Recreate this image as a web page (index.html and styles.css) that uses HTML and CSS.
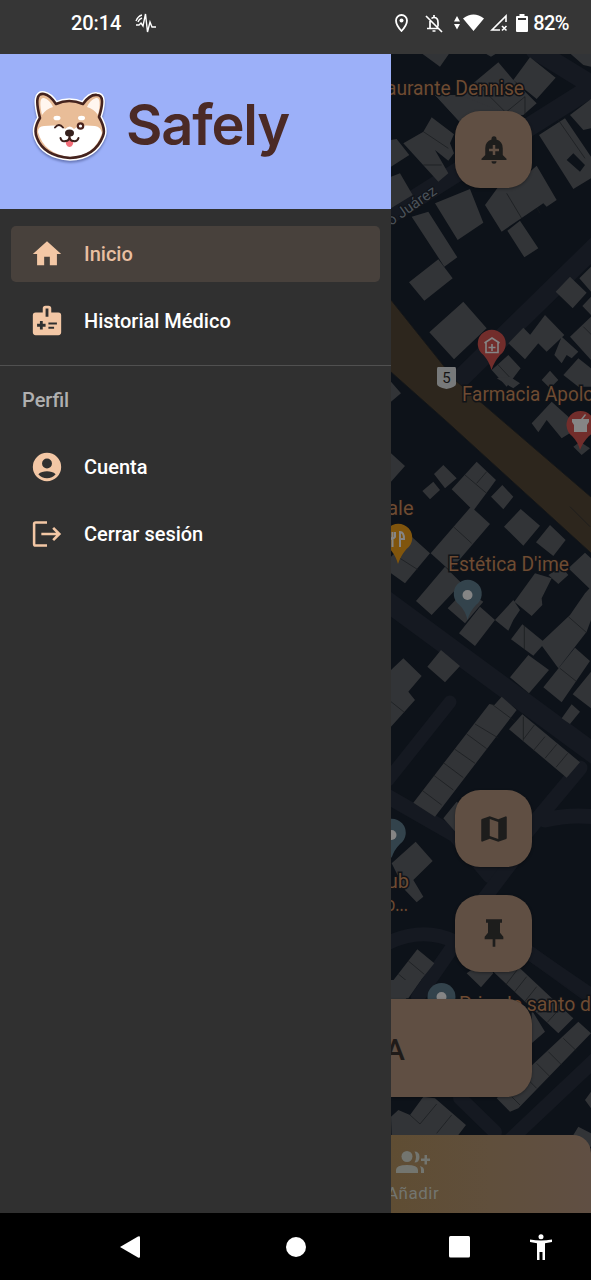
FILE: index.html
```html
<!DOCTYPE html>
<html lang="es">
<head>
<meta charset="utf-8">
<title>Safely</title>
<link rel="stylesheet" href="styles.css">
</head>
<body>
<div class="phone">
  <header class="status">
    <span class="clock">20:14</span>
    <svg class="pulse" width="22" height="20" viewBox="0 0 22 20"><path d="M1 12h3l2-2 2 3 2.500-12 2 18 2.500-10 2 5h4M1 8q2-5 6-6M3 9q1-3 4-4"/></svg>
    <div class="status-icons">
      <svg width="13" height="18" viewBox="0 0 13 18"><path d="M6.500 1a5.500 5.500 0 0 0-5.500 5.500C1 11 6.500 17 6.500 17S12 11 12 6.500A5.500 5.500 0 0 0 6.500 1Z" fill="none" stroke="#fff" stroke-width="1.800"/><circle cx="6.500" cy="6.500" r="2" fill="#fff"/></svg>
      <svg class="mute" width="18" height="19" viewBox="0 0 18 19" fill="none" stroke="#fff" stroke-width="1.700"><path d="M1 2l16 16M5 7v7M2 14.500h11M6.500 4.500Q7.500 3.500 9 3.500q4 0 4 5v4M7.500 17h3M9 1v2"/></svg>
      <svg class="wifi" width="30" height="18" viewBox="0 0 30 18" fill="#fff"><path d="M0 7.500 3 2l3 5.500zM0 10h6l-3 5.500zM9 4.500q10.500-8 21 0L19.500 17z"/></svg>
      <svg class="cell" width="18" height="18" viewBox="0 0 18 18" fill="none" stroke="#fff" stroke-width="1.600"><path d="M16 8V2L2 16h8M12 12l4.500 4.500M16.500 12 12 16.500"/></svg>
      <svg class="battery" width="12" height="18" viewBox="0 0 12 18" fill="#fff"><path d="M3.500 0h5v2H11q1 0 1 1v14q0 1-1 1H1q-1 0-1-1V3q0-1 1-1h2.500z"/><path d="M2 4h8v2H2z" fill="#363636"/></svg>
      <span class="percent">82%</span>
    </div>
  </header>

  <main class="screen">
    <aside class="drawer">
      <div class="brand">
        <svg class="logo" width="76" height="76" viewBox="0 0 76 76">
          <path class="logo-rim" d="M8 29Q1 3 12 5 18 6 24 15 37 9 51 15 58 5 65 6 74 6 67 28 74 40 71 47 63 68 38 69 12 67 5 49 1 40 8 29Z"/>
          <path class="fur" d="M8 29Q1 3 12 5 18 6 24 15 37 9 51 15 58 5 65 6 74 6 67 28 74 40 71 47 63 68 38 69 12 67 5 49 1 40 8 29Z"/>
          <path d="M10 26Q6 8 12 9q6 2 9 9-7 2-11 8zM66 26Q70 8 64 9q-6 2-9 9 7 2 11 8z" fill="#fff6ef"/>
          <path d="M6 43Q6 37 12 37q18-2 21 3 5-5 9 0 5-5 21-3 6 1 7 7-7 23-32 24Q12 65 6 43Z" fill="#fff"/>
          <path class="fur-line" d="M8 29Q1 3 12 5 18 6 24 15 37 9 51 15 58 5 65 6 74 6 67 28 74 40 71 47 63 68 38 69 12 67 5 49 1 40 8 29Z"/>
          <ellipse cx="25" cy="29" rx="3.500" ry="2.300" fill="#fff"/><ellipse cx="49.500" cy="29" rx="3.500" ry="2.300" fill="#fff"/>
          <path d="M33.500 51h8q0 7-4 7t-4-7z" fill="#f26d78"/>
          <path d="M23 38.500q4-5 8 0M28.500 49q1 4 5 3 4 0 4-5 0 5 4 5 4 1 5-3" fill="none" stroke="#3d211c" stroke-width="2" stroke-linecap="round"/>
          <ellipse cx="37.500" cy="44" rx="4.500" ry="3.500" fill="#35201c"/><circle cx="48.500" cy="37" r="2.700" fill="#fff" stroke="#4a221c" stroke-width="2.200"/>
        </svg>
        <span class="name">Safely</span>
      </div>
      <nav class="menu">
        <a class="item active"><svg class="ico" viewBox="0 0 24 24"><path d="M10 20v-6h4v6h5v-8h3L12 3 2 12h3v8z"/></svg>Inicio</a>
        <a class="item"><svg class="ico" viewBox="0 0 24 24"><path fill-rule="evenodd" d="M20 6h-5V3q0-1.800-2-1.800h-2Q9 1.200 9 3v3H4q-2 0-2 2v12q0 2 2 2h16q2 0 2-2V8q0-2-2-2zM11 3.200h2V9h-2zM11 16H9v2H7v-2H5v-2h2v-2h2v2h2zm6 1.500h-4V16h4zm2-3h-6V13h6z"/></svg>Historial Médico</a>
      </nav>
      <section class="profile">
        <h2 class="heading">Perfil</h2>
        <a class="item"><svg class="ico" viewBox="0 0 24 24"><path fill-rule="evenodd" d="M12 2a10 10 0 1 0 0 20 10 10 0 0 0 0-20zm0 4a3.500 3.500 0 1 1 0 7 3.500 3.500 0 0 1 0-7zm0 14c-2.400 0-4.600-1-6.100-2.900 3-2.700 9.200-2.700 12.200 0C16.600 19 14.400 20 12 20z"/></svg>Cuenta</a>
        <a class="item"><svg class="ico" viewBox="0 0 24 24"><path d="M12 3H4q-2 0-2 2v14q0 2 2 2h8v-1.800H3.800V4.800H12zM17 7l-1.300 1.300 2.700 2.800H8v1.800h10.400l-2.700 2.800L17 17l5-5z"/></svg>Cerrar sesión</a>
      </section>
    </aside>

    <section class="map">
      <svg class="streets" width="200" height="1159" viewBox="391 54 200 1159">
        <g class="road">
          <path d="M591 88 386 217M535 50l65 40" stroke-width="19"/>
          <path d="M600 242 460 379" stroke-width="19"/>
          <path d="M385 600 600 758" stroke-width="20"/>
          <path d="M388 780 450 702" stroke-width="13"/>
          <path d="M385 795 455 835 490 876 580 768M545 820q25-6 50-3" stroke-width="15"/>
          <path d="M515 858l-38 50M388 943q35-17 68-1l-38 55M530 953l65 47" stroke-width="14"/>
          <path d="M460 1098l35 34M600 1055l-90 85M525 950l70 48" stroke-width="14"/>
        </g>
        <path class="highway" d="M391 300 455 380 591 497V553L445 420 391 372Z"/>
        <path d="M391 300 455 380 591 497M391 372l54 48 146 133" fill="none" stroke="#151719"/>
        <g class="building">
          <g transform="translate(380 0) scale(.33333)">
            <path d="M125 160h83l-28 40zM315 160h35l-17 10zM165 285h75l45-40 70-58 45 53 70 70-40 35-190 20zM450 172l77 61-57 64-70-57zM570 160h63v40l-23-5zM570 345l63-48v88l-23 5z"/>
            <path d="M165 285h75l150 60-40 60-80-5z"/>
            <path fill-rule="evenodd" d="M477 405l78-50 78 115v65l-53 32zM560 480l20-20 35 35-15 20z"/>
            <path d="M155 352l67 51-12 27 12 30-17 22-40-32 40 70-30 25L70 430l60-35zM33 420l17-3 38 48-55 35zM33 530l27-10 38 65-65 40z"/>
            <path class="seam" d="M130 395l75 50M380 335l55-45v60M285 245l90 90M535 360l80 115M430 550l50 90M130 495h55"/>
          </g>
          <g transform="translate(385 200) scale(.33333)">
            <path d="M80 50l50-15 87 137-39 28zM72 247l88-69 43 57-85 67zM133 397l102-92 70 80-98 93zM150 10l105-43 40 101-77 52zM300 15l40-55 60-15 55-48 60 103-30 20-10-10L350 95zM367 92l38-30 55 83-42 27zM512 275l43-45 50 48-42 47zM583 235l35-35v75zM592 318l26-28v55zM370 430l45-47 45 47-40 48zM435 405l45-60 58 60-53 50zM508 465l22-55 50 45-20 20-15-10-15 25zM555 410l63-60v130zM320 510l50-45 37 40-42 55zM535 525l45-50 38 30v55h-38zM470 540l25-28 25 28-25 25z"/>
            <path class="seam" d="M365-20l45 75M335 490l42 45M595 380l30 30"/>
          </g>
          <g transform="translate(385 380) scale(.33333)">
            <path d="M18 5l30 35-30 25zM335-5l50 30 20-15-30-20zM440 130l60-65 50 45 20 40-40 25-45-55-25 37zM565 200l20-15 30 20-25 20zM18 220l42 38-42 47zM147 282l28-27 40 40-35 30zM112 333l33-28 20 25-30 28zM200 328l75-83 58 55-33 45-35 47zM318 350l34-35 33 35-30 38zM357 440l50-53 58 50-50 60zM453 487l42-52 47 45-37 48zM137 520l121-140 57 52-120 140zM80 470l55 50-75 90-42-30v-50zM93 663l87-103 50 50-90 95zM550 565l50-47 18 17v95zM490 585l40-25 20 25-30 27z"/>
            <path class="seam" d="M240 285l65 55M205 440l55 50M45 535l55 35M275 310l30-35M555 380l60 60"/>
          </g>
          <g transform="translate(385 600) scale(.33333)">
            <path d="M188 25l52-55 55 35-55 65zM222 100l63-80 45 40-60 78zM330 60l55-60 20 30-20 30-15 32zM388 5l62-85 50 15-30 60 2 20-32 33zM378 118l34-45 68 55-35 39zM465 130l90-85 45-65 18-20v100l-13 35-85 110zM375 232l55-67 62 45-60 70zM475 262l95-119 45 40-85 124zM563 283l55-68v110zM530 355l30-42 25 22-30 37zM18 210l37-35 55 53-40 47 20 25-72 80zM127 200l41-50 57 48-45 49zM85 608l228-296 15 3 22-25 45 40-245 320zM372 388l40-45 173 144-40 46z"/>
            <path class="seam" d="M418 76v72M415 350v72M320 312l70 52M270 372l70 42M245 402l60 44M210 448l60 42M175 488l60 45M145 525l60 45M110 570l60 45M448 375l-32 42M480 410l-35 42M515 433l-35 42M548 460l-35 42M550 50l55 48M525 205l50 40M18 305l40 32"/>
          </g>
          <g transform="translate(385 780) scale(.33333)">
            <path d="M175 115l40-50 45 35-45 60zM20 250l72-65 51 58-58 57 30 50-20 17-35-37zM18 610l79-102 51 42-88 110H18zM245 580l55-40 25 40-37 42zM325 575l75-15 165 155-45 45z"/>
            <path class="seam" d="M70 543l48 40M40 582l42 35M400 565l-38 50M425 590l-38 48M455 620l-38 48M495 655l-38 45M525 685l-38 42"/>
          </g>
          <g transform="translate(385 980) scale(.33333)">
            <path d="M18 0h90L70 55H18zM440 90l40 65-40 35zM335 355l245-230 38 35-218 225-25 10zM75 405l40-55 35 5 93 80-23 30H20l-2-55 22-20zM600 360l18-25v50zM565 465l15-25 38 20v40h-30z"/>
            <path class="seam" d="M155 372l-50 60-30-27M200 405l-45 55M380 350l25 25M535 175l40 38M490 215l40 40M455 250l40 40M415 285l40 40"/>
          </g>
        </g>
        <g class="pins">
          <path d="M491.500 370q-2-8-8-15a14 14 0 1 1 16.500 0q-6 7-8.500 15z" fill="#722d2b"/>
          <path d="M484.500 343l7.500-5 7.500 5M486 342v10.500h12V342M492 344v7M488.500 347.500h7" fill="none" stroke="#858585" stroke-width="1.600"/>
          <path d="M580 450q-2-8-8-14a14 14 0 1 1 17 0q-6 6-9 14z" fill="#722d2b"/>
          <path d="M572 419h9l4-5 1 1-3 4h6v3l-2 3v7h-13v-7l-2-3z" fill="#858585"/>
          <path d="M398 564q-2-8-8-15a14 14 0 1 1 16.500 0q-6 7-8.500 15z" fill="#80550d"/>
          <path d="M390 532v5q2 4 5 0v-5M392.500 532v15M400 547v-15q4 0 4 7h-3" fill="none" stroke="#858585" stroke-width="2"/>
          <g fill="#33434c"><path d="M467.500 620q-2-9-8-15a14 14 0 1 1 16.500 0q-6 6-8.500 15z"/><path d="M391.500 858q-2-8-8-14a14 14 0 1 1 16.500 0q-6 6-8.500 14z"/><circle cx="441.500" cy="997" r="14"/></g>
          <g fill="#858585"><circle cx="467.500" cy="595" r="5"/><circle cx="391.500" cy="835" r="5"/><circle cx="441.500" cy="997" r="5"/></g>
          <path d="M438 367h17q1 0 1 2v15q0 3-9.500 5-9.500-2-9.500-5v-15q0-2 1-2z" fill="#77797a"/>
          <text x="446.500" y="383" text-anchor="middle" class="shield">5</text>
        </g>
        <text class="street" transform="translate(391 226) rotate(-35)">o Juárez</text>
        <g class="label">
          <text x="524" y="95" text-anchor="end" textLength="138" lengthAdjust="spacingAndGlyphs">aurante Dennise</text>
          <text x="462" y="401" textLength="132" lengthAdjust="spacingAndGlyphs">Farmacia Apolo</text>
          <text x="413.500" y="515" text-anchor="end">ale</text>
          <text x="448" y="571" textLength="121" lengthAdjust="spacingAndGlyphs">Estética D'ime</text>
          <text x="409" y="888" text-anchor="end">ub</text>
          <text x="408" y="911" text-anchor="end" textLength="22" lengthAdjust="spacingAndGlyphs">o...</text>
          <text x="459" y="1011" textLength="132" lengthAdjust="spacingAndGlyphs">Priv. de santo d</text>
        </g>
      </svg>
      <div class="overlay">
        <button class="fab"><svg width="30" height="30" viewBox="0 0 24 24"><path fill-rule="evenodd" d="M10 3.500V3q0-2 2-2t2 2v.5q5 1.500 5 7V16l3 3v1H2v-1l3-3v-5.500q0-5.500 5-7zM11 8v3H8v2h3v3h2v-3h3v-2h-3V8zM10 21h4q0 2-2 2t-2-2z"/></svg></button>
        <button class="fab fab-map"><svg width="34" height="34" viewBox="0 0 24 24"><path fill-rule="evenodd" d="M20.500 3l-5.500 2.100L9 3 3.400 4.900 3 5.400v15.100l.5.500L9 18.900l6 2.100 5.600-1.900.4-.5V3.500zM15 19l-6-2.100V5l6 2.100z"/></svg></button>
        <button class="fab fab-pin"><svg width="32" height="32" viewBox="0 0 24 24"><path d="M6 1h12v2.500h-1.500V11L19 14v2h-6v5.500h-2V16H5v-2l2.500-3V3.500H6z"/></svg></button>
        <div class="panic">A</div>
      </div>
      <div class="tabbar">
        <svg width="36" height="25" viewBox="0 0 36 25"><circle cx="12" cy="6.500" r="5.500"/><path d="M1 23v-3q0-5 11-5t11 5v3zM19.500 1.500q5 0 5 5.500t-5 5.500q3-5.500 0-11zM25 16q4 1 4 4v3h-3v-3q0-2-1-4zM29.500 5h2.500v3.500h3V11h-3v3.500h-2.500V11H26V8.500h3.500z"/></svg>
        <span class="tab-label">Añadir</span>
      </div>
    </section>
  </main>

  <footer class="system">
    <svg width="20" height="24" viewBox="0 0 20 24"><path d="M0 12 18 1.500q2-1 2 1v19q0 2-2 1z"/></svg>
    <svg width="20" height="20" viewBox="0 0 20 20"><circle cx="10" cy="10" r="10"/></svg>
    <svg width="21" height="22" viewBox="0 0 21 22"><rect width="21" height="21.500" rx="1.500"/></svg>
    <svg width="22" height="26" viewBox="0 0 22 26"><circle cx="11" cy="2.700" r="2.500"/><path d="M0 5.500q11 2 22 0V8l-7 1.300V26h-2.500v-8h-3v8H7V9.300L0 8z"/></svg>
  </footer>
</div>
</body>
</html>
```
FILE: styles.css
```css
* { box-sizing: border-box; }
body { margin: 0; background: #000; font-family: Roboto, sans-serif; color: #fff; }
.phone { width: 591px; height: 1280px; display: flex; flex-direction: column; overflow: hidden; }
.status { height: 54px; flex: none; background: #363636; display: flex; align-items: center; padding: 0 22px 8px 71px; font-size: 20px; font-weight: 500; }
.clock { letter-spacing: -.1px; }
.pulse { margin-left: 14px; fill: none; stroke: #fff; stroke-width: 1.4; }
.status-icons { margin-left: auto; display: flex; align-items: center; }
.mute { margin-left: 17px; }
.wifi { margin-left: 11px; }
.cell { margin-left: 6px; }
.battery { margin-left: 8px; }
.percent { margin-left: 5px; font-size: 20px; letter-spacing: -.6px; }

.screen { height: 1159px; flex: none; display: grid; grid-template-columns: 391px 200px; }
.drawer { background: #303030; }
.brand { height: 155px; background: #9cb0f9; display: flex; align-items: center; padding: 0 0 10px 32px; }
.logo { flex: none; overflow: visible; filter: drop-shadow(0 2px 1px #6878b8); }
.logo-rim { fill: #fff; stroke: #fff; stroke-width: 5.6; stroke-linejoin: round; }
.fur { fill: #e9bd98; }
.fur-line { fill: none; stroke: #44231e; stroke-width: 2.6; stroke-linejoin: round; }
.name { margin: 0 0 3px 18px; font: 600 56px/70px Inter, sans-serif; letter-spacing: -1.2px; color: #4b2a26; }
.menu { padding: 17px 11px 16px; border-bottom: 1px solid #505050; }
.item { display: flex; align-items: center; height: 56px; padding-left: 19px; font-size: 20px; font-weight: 500; letter-spacing: 0; }
.item + .item { margin-top: 11px; }
.item.active { background: #48413c; color: #e9bfa1; border-radius: 5px; }
.ico { width: 34px; height: 34px; margin-right: 20px; fill: #f3c7a5; }
.profile { padding: 22px 11px 0; }
.heading { margin: 0 0 27px 11px; font-size: 20px; line-height: 24px; font-weight: 500; color: #b0b0b0; }

.map { background: #0d1219; display: grid; grid-template-rows: 1081px 78px; overflow: hidden; }
.streets { grid-area: 1 / 1 / 3 / 2; }
.road { fill: none; stroke: #151921; stroke-linecap: round; stroke-linejoin: round; }
.highway { fill: #2d261d; }
.building { fill: #323437; }
.seam { fill: none; stroke: #17191c; stroke-width: 2; }
.label { font-size: 20px; fill: #6e4b32; stroke: #101318; stroke-width: 3px; paint-order: stroke; }
.street { font-size: 15px; fill: #4b525a; stroke: #101318; stroke-width: 2px; paint-order: stroke; }
.shield { font-size: 15px; fill: #151515; }
.overlay { grid-area: 1 / 1; position: relative; padding: 57px 59px 0 0; display: flex; flex-direction: column; align-items: flex-end; }
.fab { width: 77px; height: 77px; flex: none; border: 0; padding: 0; border-radius: 25px; background: #604f43; display: flex; align-items: center; justify-content: center; box-shadow: 0 1px 3px #0005; }
.fab svg { fill: #1d1d1c; }
.fab-map { margin-top: 602px; }
.fab-pin { margin-top: 28px; }
.panic { align-self: stretch; height: 98px; margin-top: 27px; border-radius: 0 25px 25px 0; background: #604f43; color: #1f1b19; font-size: 30px; font-weight: 500; line-height: 101px; text-indent: -6px; box-shadow: 0 1px 3px #0005; }
.tabbar { grid-area: 2 / 1; position: relative; border-radius: 0 18px 0 0; background: linear-gradient(90deg, #5f4d33, #604f3c 50%, #604f43); color: #73756f; fill: #73756f; display: flex; flex-direction: column; padding: 15px 0 0 4px; }
.tab-label { margin: 8px 0 0 -8px; font-size: 17px; line-height: 20px; letter-spacing: .5px; }

.system { height: 67px; flex: none; display: flex; align-items: center; padding-left: 120px; fill: #fff; }
.system svg:nth-child(2) { margin-left: 146px; }
.system svg:nth-child(3) { margin-left: 143px; }
.system svg:nth-child(4) { margin-left: 60px; }
```
